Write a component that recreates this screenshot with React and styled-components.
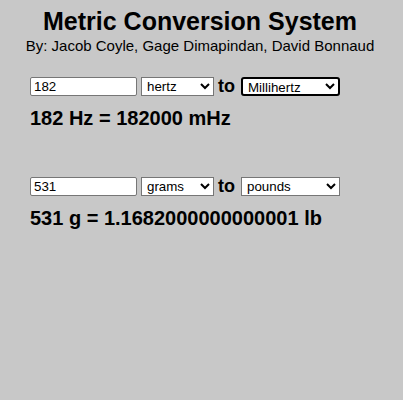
import React, { useState } from 'react';
import styled, { createGlobalStyle } from 'styled-components';

const GlobalStyle = createGlobalStyle`
  html, body {
    margin: 0;
    background: #c8c8c8;
    font-family: "Liberation Sans", Arial, sans-serif;
    color: #000;
  }
`;

const Page = styled.div`
  width: 400px;
  min-height: 400px;
  padding-top: 7px;
  box-sizing: border-box;
`;

const Title = styled.h1`
  margin: 0;
  text-align: center;
  font-size: 25px;
  line-height: 29px;
  font-weight: bold;
`;

const Byline = styled.p`
  margin: 1px 0 0;
  text-align: center;
  font-size: 15px;
  line-height: 17px;
`;

const Converter = styled.section`
  padding-left: 30px;
  margin-top: ${(p) => p.$top}px;
`;

const Row = styled.div`
  display: flex;
  align-items: center;
  height: 19px;
`;

const NumberInput = styled.input`
  width: 107px;
  height: 19px;
  box-sizing: border-box;
  margin: 0 4px 0 0;
  padding: 1px 3px;
  border: 1px solid #767676;
  border-radius: 2px;
  background: #fff;
  font-family: "Liberation Sans", Arial, sans-serif;
  font-size: 13.33px;
  outline: none;
`;

const UnitSelect = styled.select`
  width: ${(p) => p.$w}px;
  height: 19px;
  box-sizing: border-box;
  margin: 0;
  padding: 0 0 0 1px;
  border: ${(p) => (p.$focused ? '2px solid #000' : '1px solid #767676')};
  border-radius: ${(p) => (p.$focused ? '3px' : '0')};
  background: #fff;
  font-family: "Liberation Sans", Arial, sans-serif;
  font-size: 13.33px;
  color: #000;
`;

const To = styled.span`
  font-size: 18px;
  font-weight: bold;
  margin: 0 6px 0 4px;
  line-height: 19px;
`;

const Result = styled.div`
  margin-top: 11px;
  font-size: 20px;
  line-height: 23px;
  font-weight: bold;
`;

const blocks = [
  {
    value: '182',
    from: 'hertz',
    fromOptions: ['hertz', 'kilohertz', 'megahertz'],
    to: 'Millihertz',
    toOptions: ['Millihertz', 'Kilohertz', 'Megahertz'],
    focused: true,
    result: '182 Hz = 182000 mHz',
    top: 23,
  },
  {
    value: '531',
    from: 'grams',
    fromOptions: ['grams', 'kilograms', 'milligrams'],
    to: 'pounds',
    toOptions: ['pounds', 'ounces', 'tons'],
    focused: false,
    result: '531 g = 1.1682000000000001 lb',
    top: 47,
  },
];

function ConverterBlock({ block }) {
  const [value, setValue] = useState(block.value);
  return (
    <Converter $top={block.top}>
      <Row>
        <NumberInput value={value} onChange={(e) => setValue(e.target.value)} />
        <UnitSelect $w={73} defaultValue={block.from}>
          {block.fromOptions.map((o) => (
            <option key={o}>{o}</option>
          ))}
        </UnitSelect>
        <To>to</To>
        <UnitSelect $w={99} $focused={block.focused} defaultValue={block.to}>
          {block.toOptions.map((o) => (
            <option key={o}>{o}</option>
          ))}
        </UnitSelect>
      </Row>
      <Result>{block.result}</Result>
    </Converter>
  );
}

export default function App() {
  return (
    <>
      <GlobalStyle />
      <Page>
        <Title>Metric Conversion System</Title>
        <Byline>By: Jacob Coyle, Gage Dimapindan, David Bonnaud</Byline>
        {blocks.map((b, i) => (
          <ConverterBlock key={i} block={b} />
        ))}
      </Page>
    </>
  );
}
